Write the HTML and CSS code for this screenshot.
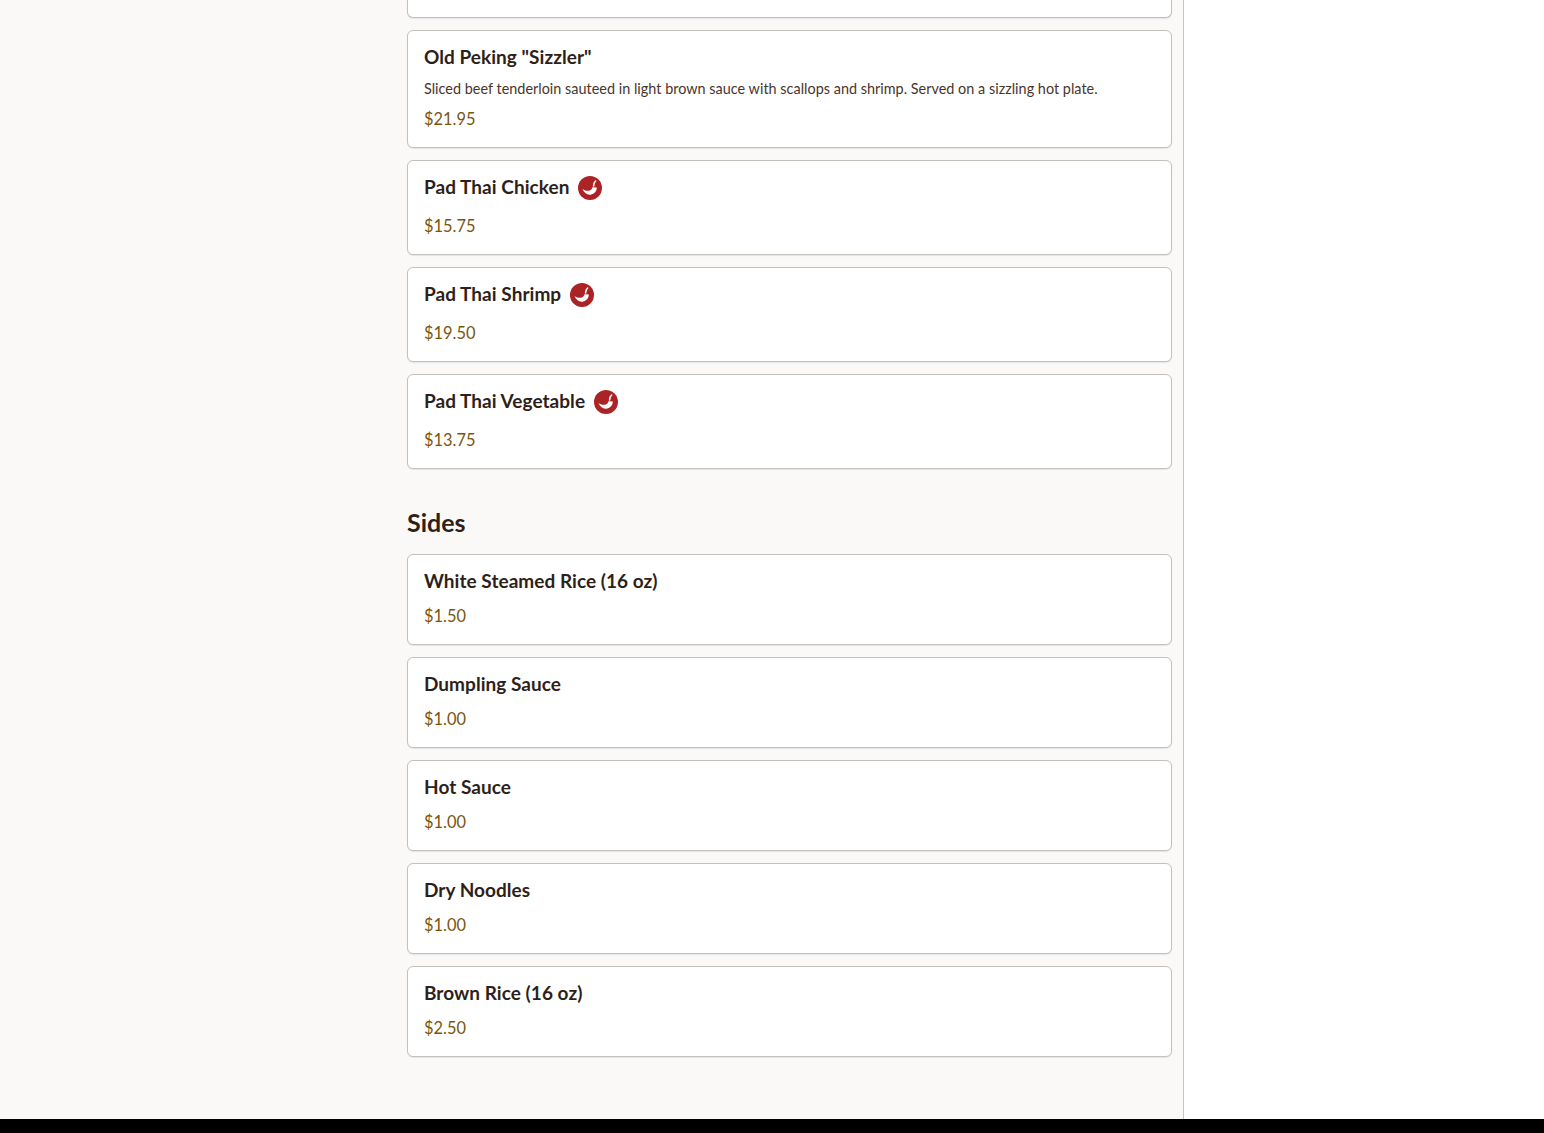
FILE: index.html
```html
<!DOCTYPE html>
<html lang="en">
<head>
    <meta charset="UTF-8">
    <meta name="viewport" content="width=device-width, initial-scale=1.0">
    <title>Menu</title>
    <link rel="stylesheet" href="styles.css">
</head>
<body>
    <svg class="sprite" width="0" height="0" aria-hidden="true">
        <symbol id="chili" viewBox="0 0 24 24">
            <circle cx="12" cy="12" r="12" fill="#ab2325"/>
            <path d="M4.4 12.8c2.2 2 5 2.5 7.4 1.6 1.5-.6 2.3-1.6 2.7-3.2l4.3.3c0 3.4-2.2 6-5.4 6.9-3.8 1-7.4-1.2-9-5.6z" fill="#fff"/>
            <path d="M15.6 10c.1-2.2.6-3.8 2-5" fill="none" stroke="#fff" stroke-width="1.6" stroke-linecap="round"/>
        </symbol>
    </svg>

    <div class="page">
        <main class="menu">
            <div class="card card-tail"></div>

            <div class="card">
                <h3 class="item-name">Old Peking "Sizzler"</h3>
                <p class="item-desc">Sliced beef tenderloin sauteed in light brown sauce with scallops and shrimp. Served on a sizzling hot plate.</p>
                <div class="item-price">$21.95</div>
            </div>
            <div class="card card-spicy">
                <h3 class="item-name">Pad Thai Chicken <svg class="spicy-icon"><use href="#chili"/></svg></h3>
                <div class="item-price">$15.75</div>
            </div>
            <div class="card card-spicy">
                <h3 class="item-name">Pad Thai Shrimp <svg class="spicy-icon"><use href="#chili"/></svg></h3>
                <div class="item-price">$19.50</div>
            </div>
            <div class="card card-spicy">
                <h3 class="item-name">Pad Thai Vegetable <svg class="spicy-icon"><use href="#chili"/></svg></h3>
                <div class="item-price">$13.75</div>
            </div>

            <h2 class="section-title">Sides</h2>

            <div class="card card-plain">
                <h3 class="item-name">White Steamed Rice (16 oz)</h3>
                <div class="item-price">$1.50</div>
            </div>
            <div class="card card-plain">
                <h3 class="item-name">Dumpling Sauce</h3>
                <div class="item-price">$1.00</div>
            </div>
            <div class="card card-plain">
                <h3 class="item-name">Hot Sauce</h3>
                <div class="item-price">$1.00</div>
            </div>
            <div class="card card-plain">
                <h3 class="item-name">Dry Noodles</h3>
                <div class="item-price">$1.00</div>
            </div>
            <div class="card card-plain">
                <h3 class="item-name">Brown Rice (16 oz)</h3>
                <div class="item-price">$2.50</div>
            </div>
        </main>
    </div>
    <footer class="footer"></footer>
</body>
</html>
```

FILE: styles.css
```css
html, body {
    margin: 0;
    padding: 0;
    height: 1133px;
    overflow: hidden;
}
body {
    display: flex;
    flex-direction: column;
    font-family: "Lato", "Noto Sans", sans-serif;
    background-color: #fff;
    color: #2b1a14;
}
.sprite {
    position: absolute;
}
.page {
    flex: 1;
    min-height: 0;
}
.menu {
    box-sizing: border-box;
    width: 1184px;
    height: 100%;
    padding: 0 11px 0 407px;
    display: flex;
    flex-direction: column;
    gap: 12px;
    background-color: #fbf9f7;
    border-right: 1px solid #c9c5c1;
}
.card {
    box-sizing: border-box;
    height: 118px;
    padding: 16px;
    background-color: #fff;
    border: 1px solid #c4c0bc;
    border-radius: 6px;
    box-shadow: 0 1px 1px rgba(0,0,0,0.08);
}
.card-tail {
    height: 18px;
    border-top: none;
    border-radius: 0 0 6px 6px;
    padding: 0;
}
.card-spicy {
    height: 95px;
}
.card-plain {
    height: 91px;
}
.item-name {
    margin: 0;
    display: flex;
    align-items: center;
    gap: 9px;
    height: 20px;
    font-size: 19px;
    font-weight: 700;
    line-height: 20px;
    letter-spacing: 0.04px;
    color: #2f1f19;
}
.spicy-icon {
    width: 24px;
    height: 24px;
    flex: none;
    margin-top: 2px;
}
.item-desc {
    margin: 12px 0 0;
    font-size: 14.4px;
    line-height: 20px;
    letter-spacing: 0.02px;
    color: #4a352c;
}
.item-price {
    margin-top: 10px;
    font-size: 16.4px;
    line-height: 20px;
    color: #7a5510;
}
.card-spicy .item-price {
    margin-top: 19px;
}
.card-plain .item-price {
    margin-top: 15px;
}
.section-title {
    margin: 25px 0 4px;
    font-size: 25px;
    font-weight: 700;
    line-height: 32px;
    color: #2f1f19;
}
.footer {
    flex: none;
    height: 14px;
    background-color: #000;
}
```
